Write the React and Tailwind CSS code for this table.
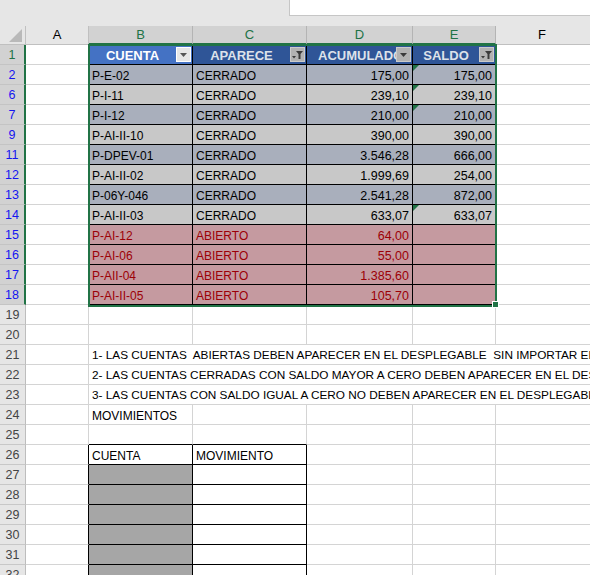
import React from "react";

const rows = [
  { n: 2, c: "P-E-02", s: "CERRADO", a: "175,00", b: "175,00", tag: true },
  { n: 6, c: "P-I-11", s: "CERRADO", a: "239,10", b: "239,10", tag: true },
  { n: 7, c: "P-I-12", s: "CERRADO", a: "210,00", b: "210,00", tag: true },
  { n: 9, c: "P-AI-II-10", s: "CERRADO", a: "390,00", b: "390,00" },
  { n: 11, c: "P-DPEV-01", s: "CERRADO", a: "3.546,28", b: "666,00" },
  { n: 12, c: "P-AI-II-02", s: "CERRADO", a: "1.999,69", b: "254,00" },
  { n: 13, c: "P-06Y-046", s: "CERRADO", a: "2.541,28", b: "872,00" },
  { n: 14, c: "P-AI-II-03", s: "CERRADO", a: "633,07", b: "633,07", tag: true },
  { n: 15, c: "P-AI-12", s: "ABIERTO", a: "64,00", b: "", open: true },
  { n: 16, c: "P-AI-06", s: "ABIERTO", a: "55,00", b: "", open: true },
  { n: 17, c: "P-AII-04", s: "ABIERTO", a: "1.385,60", b: "", open: true },
  { n: 18, c: "P-AI-II-05", s: "ABIERTO", a: "105,70", b: "", open: true },
];

const notes = [
  "1- LAS CUENTAS  ABIERTAS DEBEN APARECER EN EL DESPLEGABLE  SIN IMPORTAR EL SALDO",
  "2- LAS CUENTAS CERRADAS CON SALDO MAYOR A CERO DEBEN APARECER EN EL DESPLEGABLE",
  "3- LAS CUENTAS CON SALDO IGUAL A CERO NO DEBEN APARECER EN EL DESPLEGABLE",
];

const RowHead = ({ n, sel, first }) => (
  <div
    className={`w-[26px] shrink-0 flex items-center justify-center pt-[2px] text-[12.5px] border-b ${
      sel
        ? "bg-[#d2d2d2] border-b-[#c4c4c4] border-r-2 border-r-[#217346]"
        : "bg-[#e6e6e6] border-b-[#c8c8c8] border-r border-r-[#bdbdbd] text-[#444]"
    } ${first ? "text-[#217346]" : sel ? "text-[#1515f0]" : ""}`}
  >
    {n}
  </div>
);

const Grid = ({ w }) => <div className={`${w} shrink-0 border-r border-b border-[#d4d4d4]`} />;
const Rest = () => <div className="flex-1 border-b border-[#d4d4d4]" />;

const Arrow = ({ filter, light }) => (
  <div
    className={`w-[15px] h-[15px] shrink-0 border mr-[1px] ${
      light ? "bg-[#e6e6e6] border-white" : "bg-[#b2b2b2] border-[#cbcbcb]"
    }`}
  >
    <svg width="13" height="13" viewBox="0 0 13 13" fill={light ? "#555" : "#3a3a3a"}>
      {filter ? (
        <>
          <path d="M5 3h7l-2.5 3v5h-2V6z" />
          <path d="M1 8h4l-2 2.5z" />
        </>
      ) : (
        <path d="M3 5h7l-3.5 4z" />
      )}
    </svg>
  </div>
);

const HeadCell = ({ w, label, filter, active, text = "text-center" }) => (
  <div
    className={`${w} shrink-0 flex items-center border-r border-b border-black font-bold text-[13px] ${
      active ? "bg-[#4472c4] text-white" : "bg-[#2f5597] text-[#dde2ea]"
    }`}
  >
    <div className={`flex-1 overflow-hidden whitespace-nowrap pt-[2px] ${text}`}>{label}</div>
    <Arrow filter={filter} light={active} />
  </div>
);

export default function App() {
  return (
    <div className="relative w-[590px] h-[575px] overflow-hidden bg-white text-[12px] text-black font-['Liberation_Sans',Arial,sans-serif]">
      {/* formula strip */}
      <div className="h-[26px] bg-[#e6e6e6] flex items-start">
        <div className="w-[289px] shrink-0" />
        <div className="flex-1 h-[16px] bg-white border-l border-b border-[#c6c6c6]" />
      </div>

      {/* column letters */}
      <div className="flex h-[19px] text-[13px]">
        <div className="w-[26px] shrink-0 bg-[#e6e6e6] border-r border-b border-[#c0c0c0] flex items-end justify-end pr-[3px] pb-[2px]">
          <svg width="13" height="13" viewBox="0 0 13 13">
            <path d="M13 0V13H0z" fill="#b9b9b9" />
          </svg>
        </div>
        <div className="w-[63px] shrink-0 bg-[#e6e6e6] border-r border-b border-[#c0c0c0] flex items-center justify-center">A</div>
        {[
          ["w-[104px]", "B"],
          ["w-[114px]", "C"],
          ["w-[106px]", "D"],
          ["w-[83px]", "E"],
        ].map(([w, l]) => (
          <div
            key={l}
            className={`${w} shrink-0 bg-[#d2d2d2] border-r border-r-[#b4b4b4] border-b-2 border-b-[#217346] flex items-center justify-center text-[#217346]`}
          >
            {l}
          </div>
        ))}
        <div className="flex-1 bg-[#e6e6e6] border-b border-[#c0c0c0] flex items-center justify-center pr-[2px]">F</div>
      </div>

      {/* row 1 - table header */}
      <div className="flex h-[20px]">
        <RowHead n={1} sel first />
        <Grid w="w-[63px]" />
        <HeadCell w="w-[104px]" label="CUENTA" active />
        <HeadCell w="w-[114px]" label="APARECE" filter />
        <HeadCell w="w-[106px]" label="ACUMULADO" text="text-left pl-[11px]" />
        <HeadCell w="w-[83px]" label="SALDO" filter />
        <Rest />
      </div>

      {rows.map((r, i) => {
        const tone = r.open
          ? "bg-[#c59aa0] text-[#9c0006]"
          : i % 2 === 0
          ? "bg-[#a9afbc]"
          : "bg-[#c8c8c8]";
        return (
          <div key={r.n} className="flex h-[20px]">
            <RowHead n={r.n} sel />
            <Grid w="w-[63px]" />
            <div className={`w-[104px] shrink-0 border-r border-b border-black pl-[3px] pt-[3px] flex items-center ${tone}`}>{r.c}</div>
            <div className={`w-[114px] shrink-0 border-r border-b border-black pl-[3px] pt-[3px] flex items-center ${tone}`}>{r.s}</div>
            <div className={`w-[106px] shrink-0 border-r border-b border-black pr-[3px] pt-[3px] flex items-center justify-end text-[12.5px] ${tone}`}>{r.a}</div>
            <div className={`relative w-[83px] shrink-0 border-r border-b border-black pr-[3px] pt-[3px] flex items-center justify-end text-[12.5px] ${tone}`}>
              {r.tag && (
                <div className="absolute left-0 top-0 w-0 h-0 border-t-[6px] border-t-[#217346] border-r-[6px] border-r-transparent" />
              )}
              {r.b}
            </div>
            <Rest />
          </div>
        );
      })}

      {[19, 20].map((n) => (
        <div key={n} className="flex h-[20px]">
          <RowHead n={n} />
          <Grid w="w-[63px]" />
          <Grid w="w-[104px]" />
          <Grid w="w-[114px]" />
          <Grid w="w-[106px]" />
          <Grid w="w-[83px]" />
          <Rest />
        </div>
      ))}

      {notes.map((t, i) => (
        <div key={t} className="flex h-[20px]">
          <RowHead n={21 + i} />
          <Grid w="w-[63px]" />
          <div className="flex-1 min-w-0 border-b border-[#d4d4d4] pl-[3px] pt-[3px] flex items-center whitespace-pre overflow-hidden text-[11.8px]">{t}</div>
        </div>
      ))}

      <div className="flex h-[20px]">
        <RowHead n={24} />
        <Grid w="w-[63px]" />
        <div className="w-[104px] shrink-0 border-r border-b border-[#d4d4d4] pl-[3px] pt-[3px] flex items-center">MOVIMIENTOS</div>
        <Grid w="w-[114px]" />
        <Grid w="w-[106px]" />
        <Grid w="w-[83px]" />
        <Rest />
      </div>

      <div className="flex h-[20px]">
        <RowHead n={25} />
        <Grid w="w-[63px]" />
        <div className="w-[104px] shrink-0 border-r border-r-[#d4d4d4] border-b border-b-black" />
        <div className="w-[114px] shrink-0 border-r border-r-[#d4d4d4] border-b border-b-black" />
        <Grid w="w-[106px]" />
        <Grid w="w-[83px]" />
        <Rest />
      </div>

      {[26, 27, 28, 29, 30, 31, 32].map((n) => (
        <div key={n} className="flex h-[20px]">
          <RowHead n={n} />
          <div className="w-[63px] shrink-0 border-r border-r-black border-b border-b-[#d4d4d4]" />
          <div className={`w-[104px] shrink-0 border-r border-b border-black pl-[3px] pt-[3px] flex items-center ${n > 26 ? "bg-[#a6a6a6]" : ""}`}>
            {n === 26 ? "CUENTA" : ""}
          </div>
          <div className="w-[114px] shrink-0 border-r border-b border-black pl-[3px] pt-[3px] flex items-center">
            {n === 26 ? "MOVIMIENTO" : ""}
          </div>
          <Grid w="w-[106px]" />
          <Grid w="w-[83px]" />
          <Rest />
        </div>
      ))}

      {/* selection outline */}
      <div className="absolute left-[88px] top-[44px] w-[409px] h-[263px] border-2 border-[#217346] pointer-events-none" />
      <div className="absolute left-[492px] top-[301px] w-[7px] h-[7px] bg-[#217346] border border-white" />
    </div>
  );
}
